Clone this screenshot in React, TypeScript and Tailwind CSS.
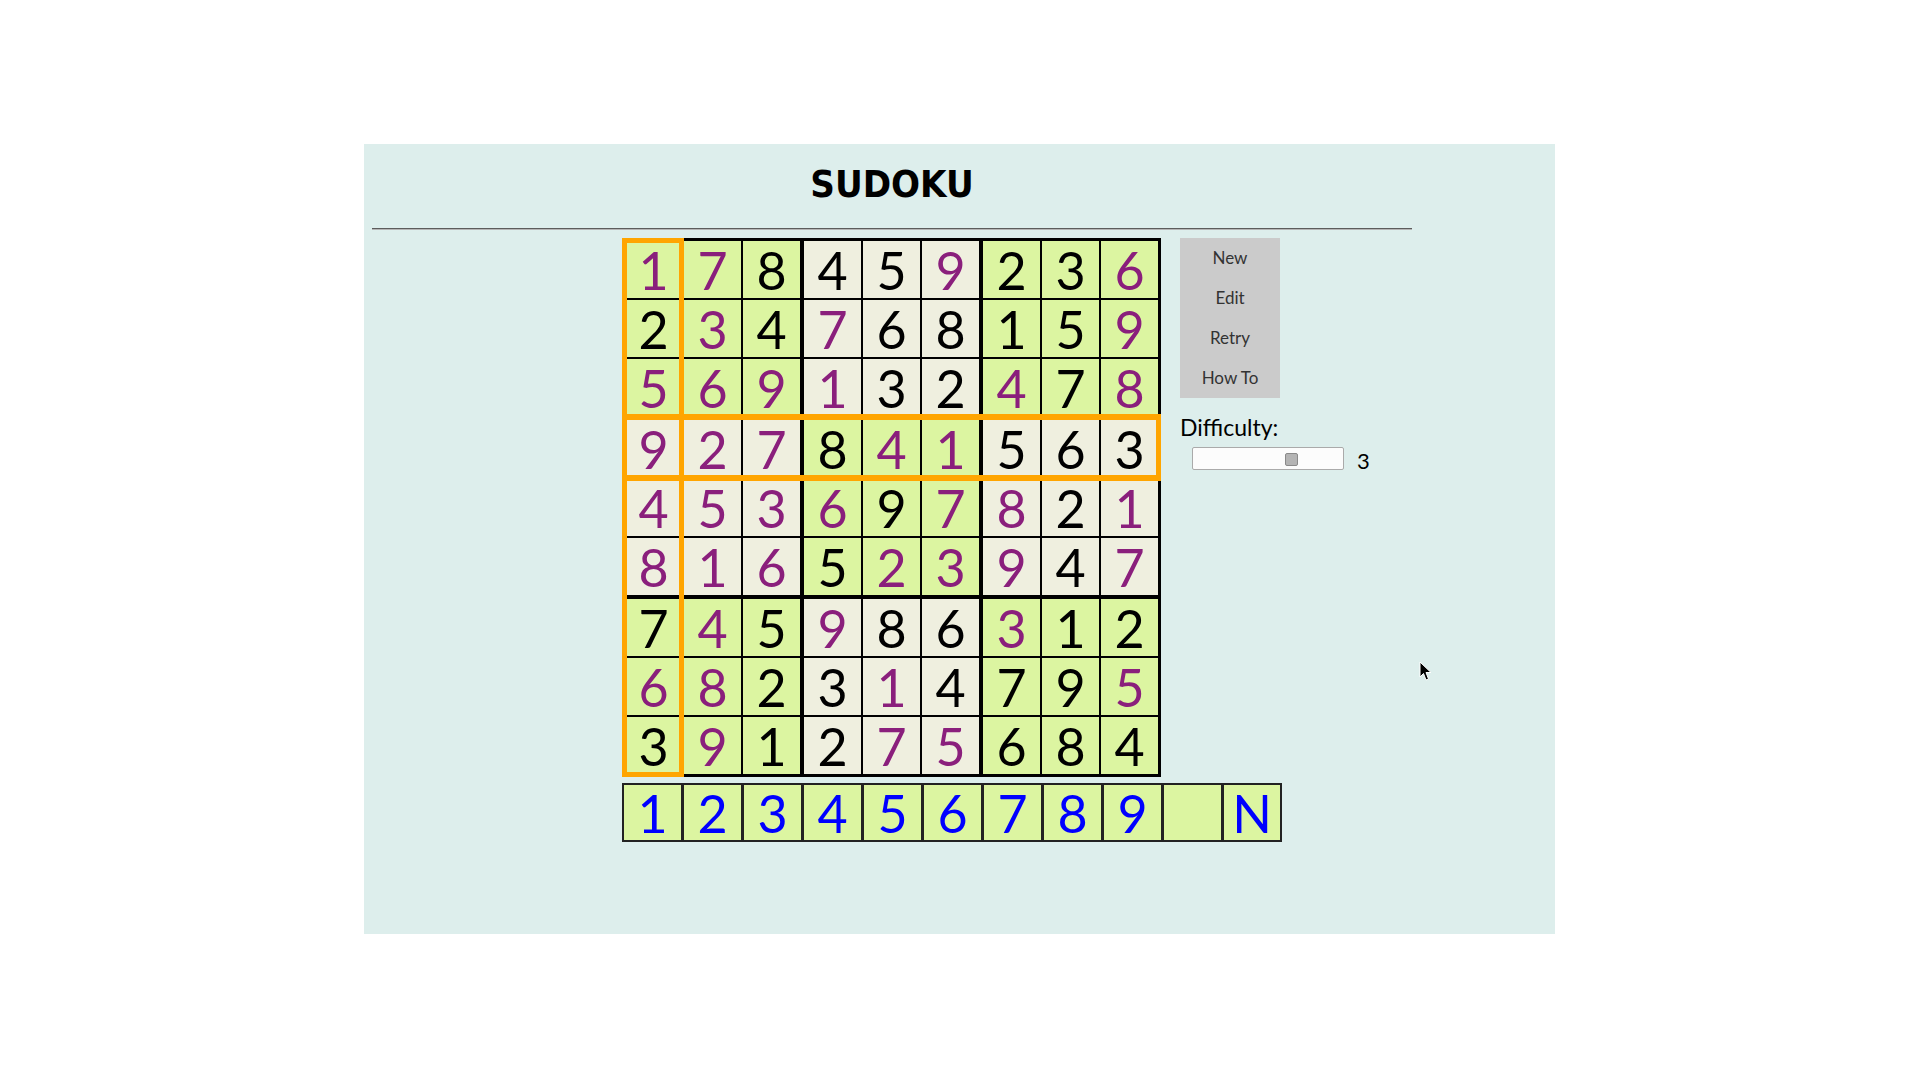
import React from 'react';

const ROWS = [
  '178459236',
  '234768159',
  '569132478',
  '927841563',
  '453697821',
  '816523947',
  '745986312',
  '682314795',
  '391275684',
];

// p = entered by player (purple), b = given (black)
const MASKS = [
  'ppbbbpbbp',
  'bpbpbbbbp',
  'ppppbbpbp',
  'pppbppbbb',
  'ppppbppbp',
  'pppbpppbp',
  'bpbpbbpbb',
  'ppbbpbbbp',
  'bpbbppbbb',
];

const PICKS = ['1', '2', '3', '4', '5', '6', '7', '8', '9', '', 'N'];

const Cell: React.FC<{ r: number; c: number }> = ({ r, c }) => {
  const box = Math.floor(r / 3) * 3 + Math.floor(c / 3);
  const purple = MASKS[r][c] === 'p';
  return (
    <div
      className={`w-[57px] h-[57px] flex items-center justify-center text-[52px] leading-none ${
        box % 2 === 0 ? 'bg-[#dcf5a1]' : 'bg-[#efefdf]'
      } ${purple ? 'text-[#8a1f7c]' : 'text-black'}`}
    >
      {ROWS[r][c]}
    </div>
  );
};

const Board: React.FC = () => {
  return (
    <div className="relative w-[539px] h-[539px] bg-black p-[3px]">
      <div className="grid grid-cols-3 gap-[4px]">
        {[0, 1, 2].map((br) =>
          [0, 1, 2].map((bc) => (
            <div key={`${br}-${bc}`} className="grid grid-cols-3 gap-[2px]">
              {[0, 1, 2].map((i) =>
                [0, 1, 2].map((j) => <Cell key={`${i}-${j}`} r={br * 3 + i} c={bc * 3 + j} />)
              )}
            </div>
          ))
        )}
      </div>
      {/* selected column / row highlight */}
      <div className="absolute left-0 top-0 w-[62px] h-[539px] border-[5px] border-[#ffa500]" />
      <div className="absolute left-0 top-[176px] w-[539px] h-[67px] border-x-[5px] border-y-[6px] border-[#ffa500]" />
    </div>
  );
};

export default function App() {
  return (
    <div className="min-h-screen bg-white pt-[144px] pl-[364px] font-['Lato',sans-serif]">
      <div className="relative w-[1191px] h-[790px] bg-[#ddeeec]">
        <div className="w-[1040px] ml-2">
          <div className="h-[84px] pb-[4px] flex items-center justify-center">
            <h1 className="text-[38px] font-bold text-black font-['DejaVu_Sans_Condensed','DejaVu_Sans',sans-serif]">
              SUDOKU
            </h1>
          </div>
          <div className="h-0 border-t border-t-[#5c5c5c] border-b border-b-[#b5b5b5]" />

          <div className="flex mt-2 ml-[250px]">
            <div className="w-[539px] shrink-0 flex flex-col items-start gap-[6px]">
              <Board />
              <div className="flex w-[660px] shrink-0">
                {PICKS.map((p, i) => (
                  <div
                    key={i}
                    className={`w-[60px] h-[59px] shrink-0 bg-[#dcf5a1] border-[#222] flex items-center justify-center text-[52px] leading-none text-[#0000ff] ${
                      i === PICKS.length - 1 ? 'border-2' : 'border-y-2 border-l-2 border-r'
                    }`}
                  >
                    {p}
                  </div>
                ))}
              </div>
            </div>

            <div className="ml-[19px] flex flex-col">
              <div className="w-[100px] bg-[#cbcbcb] flex flex-col">
                {['New', 'Edit', 'Retry', 'How To'].map((b) => (
                  <button key={b} className="h-[40px] text-[17px] text-[#333]">
                    {b}
                  </button>
                ))}
              </div>
              <div className="mt-4 text-[23px] text-black leading-[1.2] whitespace-nowrap">Difficulty:</div>
              <div className="flex items-end mt-[5px] pl-3">
                <div className="relative shrink-0 w-[152px] h-[23px] bg-[#fcfcfc] border border-[#aaa] rounded-[2px]">
                  <div className="absolute left-[92px] top-[5px] w-[13px] h-[13px] bg-[#b4b4b4] border border-[#8a8a8a] rounded-[2px]" />
                </div>
                <span className="ml-[13px] text-[22px] leading-none -mb-[2px]">3</span>
              </div>
            </div>
          </div>
        </div>

        {/* mouse pointer */}
        <svg className="absolute left-[1055px] top-[517px]" width="14" height="21" viewBox="0 0 14 21">
          <path d="M1 1 L1 16 L4.5 12.5 L7 19 L9.5 18 L7 11.5 L12 11.5 Z" fill="#000" stroke="#fff" strokeWidth="1" />
        </svg>
      </div>
    </div>
  );
}
